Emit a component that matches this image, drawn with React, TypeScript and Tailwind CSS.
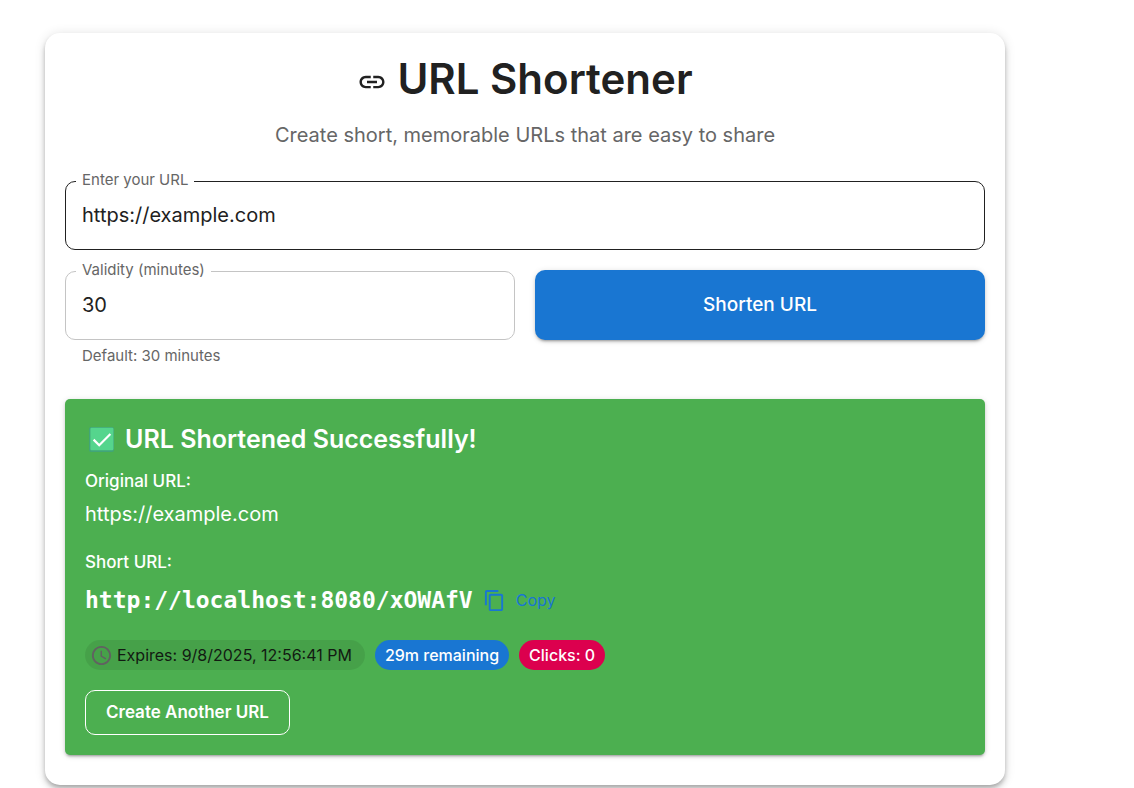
import { useState } from "react";
import { MdAccessTime, MdContentCopy, MdLink } from "react-icons/md";

function CheckBadge() {
  return (
    <svg viewBox="0 0 25 25" className="size-[25px] shrink-0" aria-hidden="true">
      <rect width="25" height="25" rx="2" fill="#41a578" />
      <rect x="1.4" y="0.7" width="23" height="22.6" rx="1.2" fill="#55d58d" />
      <path d="M4.6 12.6l5.6 5.6L21.4 7" fill="none" stroke="#fff" strokeWidth="2.2" />
    </svg>
  );
}

type FieldProps = {
  id: string;
  label: string;
  type: string;
  value: string;
  onChange: (value: string) => void;
  borderClass: string;
  helper?: string;
};

function Field({ id, label, type, value, onChange, borderClass, helper }: FieldProps) {
  return (
    <div className="min-w-0">
      <div className="relative">
        <label
          htmlFor={id}
          className="absolute -top-[11px] left-[11px] bg-white px-1.5 text-[15px] leading-5 text-[#666]"
        >
          {label}
        </label>
        <input
          id={id}
          type={type}
          value={value}
          onChange={(e) => onChange(e.target.value)}
          className={`block h-[69px] w-full rounded-[10px] border bg-transparent px-4 pb-0.5 text-[20px] text-[#212121] outline-none ${borderClass}`}
        />
      </div>
      {helper && <p className="mt-1 ml-[17px] text-[15px] leading-6 text-[#666]">{helper}</p>}
    </div>
  );
}

export default function App() {
  const [url, setUrl] = useState("https://example.com");
  const [minutes, setMinutes] = useState("30");

  return (
    <main className="pt-[33px] pr-5 pb-10 pl-[45px] font-['Inter',sans-serif] text-[#212121]">
      <section className="max-w-[960px] rounded-[15px] bg-white px-5 pt-5 pb-[30px] shadow-[0_3px_4px_-1px_rgba(0,0,0,0.2),0_5px_6px_rgba(0,0,0,0.14),0_1px_12px_rgba(0,0,0,0.12)]">
        <h1 className="flex items-center justify-center gap-2.5 text-[42px] leading-[52px] font-semibold">
          <MdLink className="mt-1.5 size-[30px]" aria-hidden="true" />
          URL Shortener
        </h1>
        <p className="mt-4 text-center text-[20px] leading-7 text-[#666]">
          Create short, memorable URLs that are easy to share
        </p>

        <form className="mt-8" onSubmit={(e) => e.preventDefault()}>
          <Field
            id="url"
            label="Enter your URL"
            type="text"
            value={url}
            onChange={setUrl}
            borderClass="border-[#212121]"
          />
          <div className="mt-5 grid grid-cols-2 items-start gap-5">
            <div className="pt-px">
              <Field
                id="validity"
                label="Validity (minutes)"
                type="text"
                value={minutes}
                onChange={setMinutes}
                borderClass="border-[#c4c4c4]"
                helper="Default: 30 minutes"
              />
            </div>
            <button
              type="submit"
              className="h-[70px] rounded-[10px] bg-[#1976d2] text-[19px] font-medium text-white shadow-[0_3px_2px_-2px_rgba(0,0,0,0.2),0_2px_3px_rgba(0,0,0,0.14),0_1px_6px_rgba(0,0,0,0.12)]"
            >
              Shorten URL
            </button>
          </div>
        </form>

        <div className="mt-[31px] rounded-[5px] bg-[#4caf50] p-5 text-white shadow-[0_3px_2px_-2px_rgba(0,0,0,0.2),0_2px_3px_rgba(0,0,0,0.14),0_1px_6px_rgba(0,0,0,0.12)]">
          <h2 className="flex items-center gap-[11px] pl-1 text-[25px] leading-10 font-semibold">
            <CheckBadge />
            URL Shortened Successfully!
          </h2>
          <p className="mt-2.5 text-[17px] leading-6 font-medium">Original URL:</p>
          <p className="mt-1.5 text-[20px] leading-[30px]">https://example.com</p>
          <p className="mt-[21px] text-[17px] leading-6 font-medium">Short URL:</p>
          <div className="mt-2 flex h-9 items-center gap-2.5">
            <span className="font-['DejaVu_Sans_Mono',monospace] text-[23px] font-bold">
              http://localhost:8080/xOWAfV
            </span>
            <button type="button" className="flex items-center gap-2.5 text-[16px] text-[#1976d2]">
              <MdContentCopy className="size-[23px]" aria-hidden="true" />
              Copy
            </button>
          </div>
          <div className="mt-[22px] flex flex-wrap gap-2.5 text-[16px]">
            <span className="flex h-[30px] items-center gap-1 rounded-full bg-black/8 pr-[13px] pl-[5px] text-[#121a12]">
              <MdAccessTime className="size-[23px] text-[#616161]" aria-hidden="true" />
              Expires: 9/8/2025, 12:56:41 PM
            </span>
            <span className="flex h-[30px] items-center rounded-full bg-[#1976d2] px-2.5 font-medium">
              29m remaining
            </span>
            <span className="flex h-[30px] items-center rounded-full bg-[#dc004e] px-2.5 font-medium">
              Clicks: 0
            </span>
          </div>
          <button
            type="button"
            className="mt-5 block h-[45px] rounded-[10px] border border-white px-5 text-[17px] font-semibold"
          >
            Create Another URL
          </button>
        </div>
      </section>
    </main>
  );
}
